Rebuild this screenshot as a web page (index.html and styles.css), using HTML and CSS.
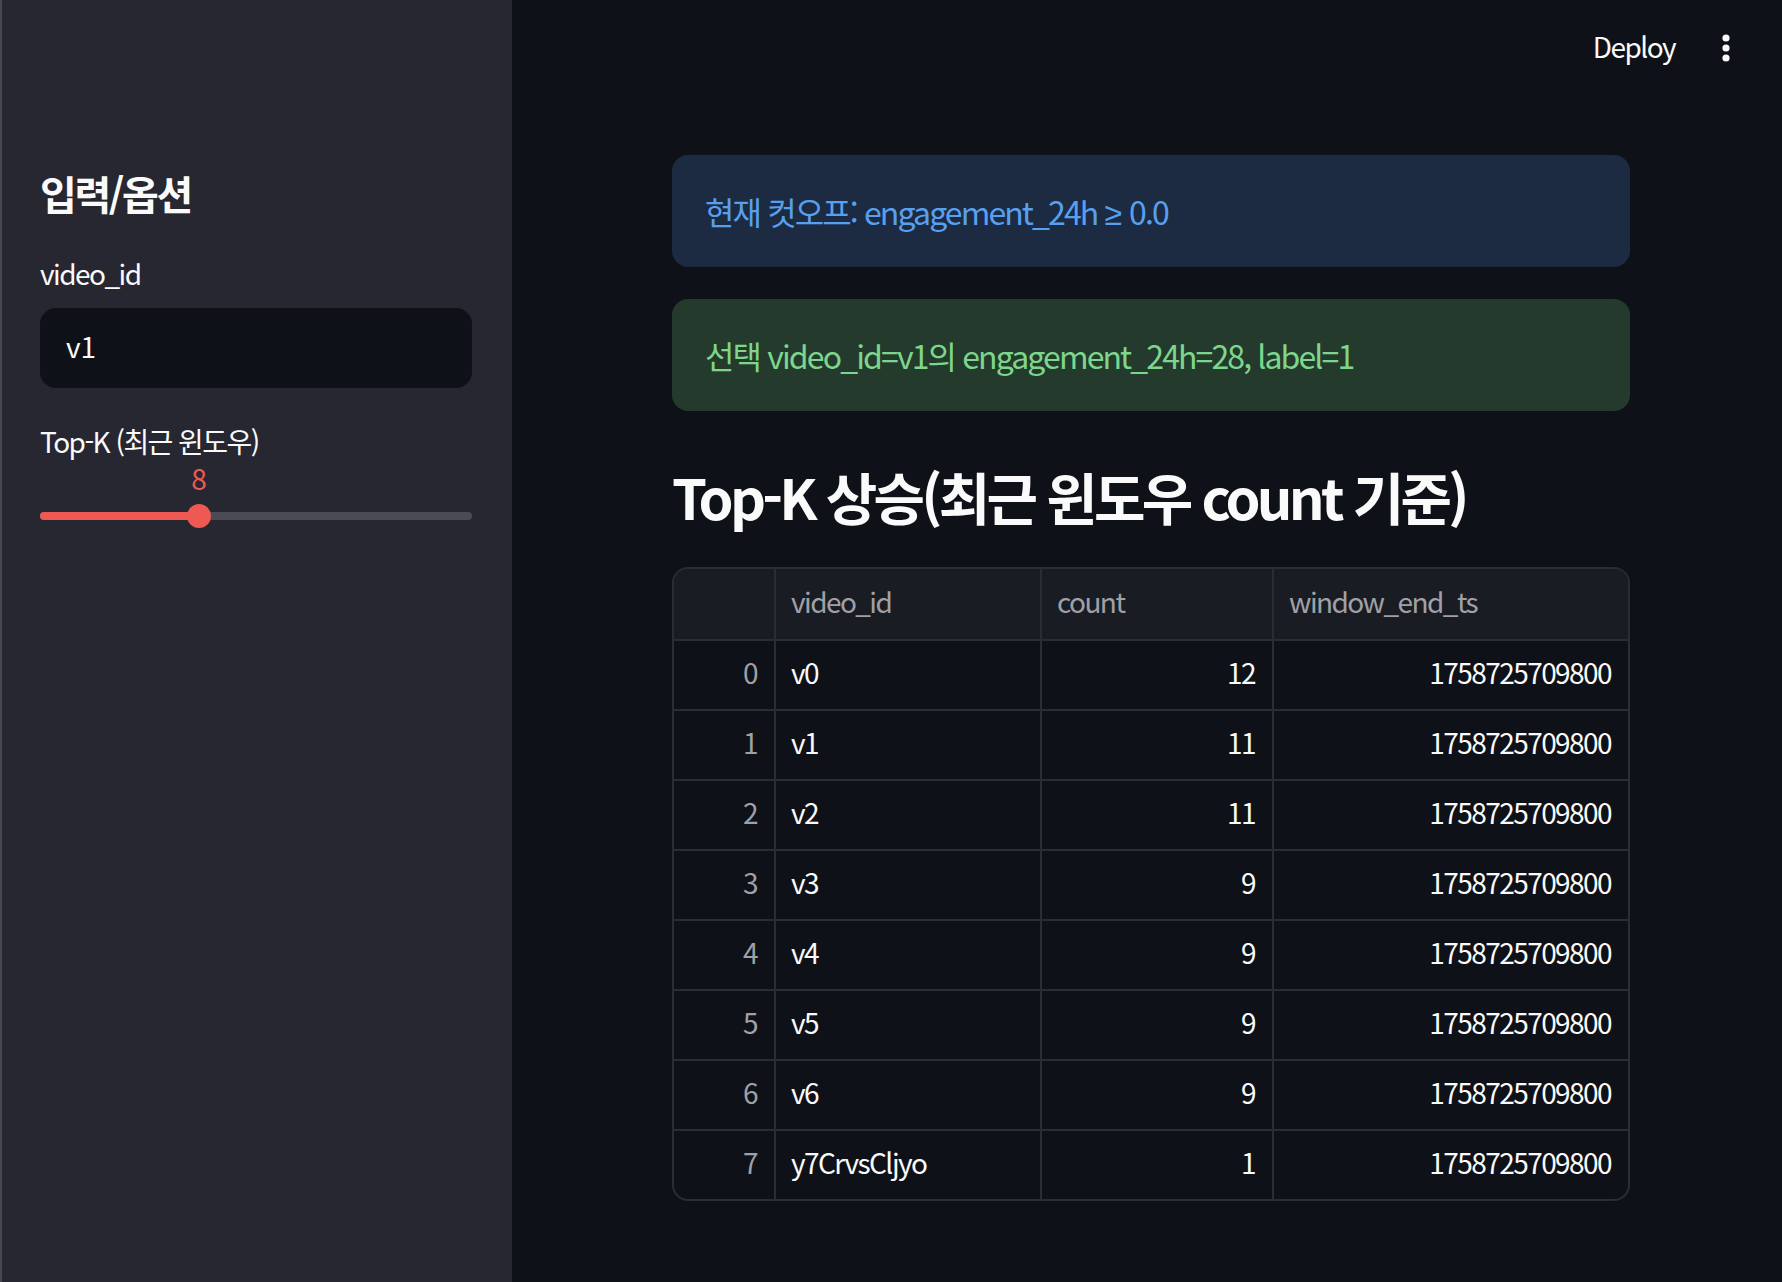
FILE: index.html
```html
<!DOCTYPE html>
<html lang="ko">
<head>
<meta charset="utf-8">
<title>Top-K</title>
<link rel="stylesheet" href="styles.css">
</head>
<body>
<div class="app">
  <aside class="sidebar">
    <h2 class="side-title">입력/옵션</h2>
    <div class="field-label">video_id</div>
    <div class="text-input">v1</div>
    <div class="field-label slider-label">Top-K (최근 윈도우)</div>
    <div class="slider">
      <div class="slider-value" style="left: 36.8%">8</div>
      <div class="track">
        <div class="fill" style="width: 36.8%"></div>
        <div class="thumb" style="left: 36.8%"></div>
      </div>
    </div>
  </aside>
  <main class="main">
    <header class="topbar">
      <span class="deploy">Deploy</span>
      <span class="menu">
        <svg width="10" height="30" viewBox="0 0 10 30"><circle cx="5" cy="5" r="3.6" fill="#fafafa"/><circle cx="5" cy="15" r="3.6" fill="#fafafa"/><circle cx="5" cy="25" r="3.6" fill="#fafafa"/></svg>
      </span>
    </header>
    <div class="content">
      <div class="alert info">현재 컷오프: engagement_24h <span class="sym">≥</span> 0.0</div>
      <div class="alert success">선택 video_id=v1의 engagement_24h=28, label=1</div>
      <h3 class="section-title">Top-K 상승(최근 윈도우 count 기준)</h3>
      <div class="grid">
        <div class="cell head"></div><div class="cell head">video_id</div><div class="cell head">count</div><div class="cell head last">window_end_ts</div>
        <div class="cell idx">0</div><div class="cell">v0</div><div class="cell num">12</div><div class="cell num last">1758725709800</div>
        <div class="cell idx">1</div><div class="cell">v1</div><div class="cell num">11</div><div class="cell num last">1758725709800</div>
        <div class="cell idx">2</div><div class="cell">v2</div><div class="cell num">11</div><div class="cell num last">1758725709800</div>
        <div class="cell idx">3</div><div class="cell">v3</div><div class="cell num">9</div><div class="cell num last">1758725709800</div>
        <div class="cell idx">4</div><div class="cell">v4</div><div class="cell num">9</div><div class="cell num last">1758725709800</div>
        <div class="cell idx">5</div><div class="cell">v5</div><div class="cell num">9</div><div class="cell num last">1758725709800</div>
        <div class="cell idx">6</div><div class="cell">v6</div><div class="cell num">9</div><div class="cell num last">1758725709800</div>
        <div class="cell idx bottom">7</div><div class="cell bottom">y7CrvsCljyo</div><div class="cell num bottom">1</div><div class="cell num last bottom">1758725709800</div>
      </div>
    </div>
  </main>
</div>
</body>
</html>
```
FILE: styles.css
```css
* { box-sizing: border-box; }
html, body { margin: 0; padding: 0; }
body {
  font-family: "Noto Sans CJK KR", "Noto Sans", sans-serif;
  color: #fafafa;
  background: #0e1117;
}
.app {
  display: flex;
  height: 100vh;
  overflow: hidden;
}
.sidebar {
  width: 512px;
  flex: 0 0 512px;
  background: #262730;
  border-left: 2px solid #474852;
  padding: 169px 40px 0 38px;
  display: flex;
  flex-direction: column;
}
.side-title {
  margin: 0;
  font-size: 40px;
  line-height: 48px;
  font-weight: 700;
  letter-spacing: -0.06em;
}
.field-label {
  margin-top: 36px;
  font-size: 28px;
  line-height: 40px;
  letter-spacing: -0.055em;
}
.text-input {
  margin-top: 15px;
  height: 80px;
  background: #0e1117;
  border-radius: 16px;
  padding: 0 26px 4px;
  display: flex;
  align-items: center;
  font-size: 28px;
}
.slider-label { margin-top: 33px; }
.slider {
  position: relative;
  height: 72px;
}
.slider-value {
  position: absolute;
  top: 3px;
  transform: translateX(-50%);
  font-size: 28px;
  line-height: 28px;
  color: #ee5953;
}
.track {
  position: absolute;
  left: 0;
  right: 0;
  top: 51px;
  height: 8px;
  border-radius: 4px;
  background: #4a4b55;
}
.fill {
  height: 100%;
  border-radius: 4px;
  background: #ee5953;
}
.thumb {
  position: absolute;
  top: 50%;
  width: 24px;
  height: 24px;
  margin: -12px 0 0 -12px;
  border-radius: 50%;
  background: #ee5953;
}
.main {
  flex: 1;
  display: flex;
  flex-direction: column;
  background: #0e1117;
}
.topbar {
  height: 96px;
  display: flex;
  justify-content: flex-end;
  align-items: center;
  gap: 46px;
  padding-right: 51px;
}
.deploy {
  font-size: 28px;
  line-height: 40px;
  padding-bottom: 5px;
  letter-spacing: -0.055em;
}
.menu { display: flex; align-items: center; }
.content {
  width: 958px;
  margin-left: 160px;
  padding-top: 59px;
}
.alert {
  height: 112px;
  border-radius: 16px;
  padding: 32px 33px;
  font-size: 32px;
  line-height: 48px;
  letter-spacing: -0.059em;
}
.sym {
  font-family: "Liberation Sans", sans-serif;
  letter-spacing: 0;
  line-height: 1;
}
.alert + .alert { margin-top: 32px; }
.info { background: #1c2b41; color: #58a0ef; }
.success { background: #233a2c; color: #7dd68c; }
.section-title {
  margin: 51px 0 0;
  font-size: 56px;
  line-height: 67px;
  font-weight: 700;
  letter-spacing: -0.067em;
}
.grid {
  margin-top: 38px;
  display: grid;
  grid-template-columns: 102px 266px 232px 1fr;
  border: 2px solid #2b2d35;
  border-radius: 16px;
  overflow: hidden;
}
.cell {
  height: 70px;
  display: flex;
  align-items: center;
  padding: 0 17px 7px 15px;
  font-size: 28px;
  letter-spacing: -0.056em;
  border-right: 2px solid #2b2d35;
  border-bottom: 2px solid #2b2d35;
  white-space: nowrap;
}
.cell.head {
  height: 72px;
  background: #1a1c24;
  color: #a0a1a7;
}
.cell.last { border-right: none; }
.cell.bottom { border-bottom: none; height: 68px; }
.idx { justify-content: flex-end; color: #a0a1a7; }
.num { justify-content: flex-end; }
```
